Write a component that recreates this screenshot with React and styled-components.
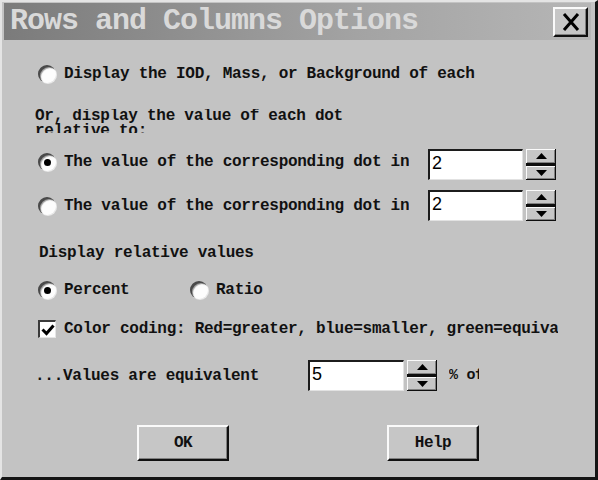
import React from "react";
import styled, { createGlobalStyle } from "styled-components";

const GlobalStyle = createGlobalStyle`
  html, body {
    margin: 0;
    padding: 0;
    background: #c3c3c3;
  }
`;

function Radio({ checked }) {
  return <RadioDot>{checked && <RadioPip />}</RadioDot>;
}

function Spinner() {
  return (
    <SpinBox>
      <SpinHalf>
        <svg width="11" height="6" viewBox="0 0 11 6">
          <path d="M0 6 L5.5 0 L11 6 Z" fill="#000" />
        </svg>
      </SpinHalf>
      <SpinHalf>
        <svg width="11" height="6" viewBox="0 0 11 6">
          <path d="M0 0 L5.5 6 L11 0 Z" fill="#000" />
        </svg>
      </SpinHalf>
    </SpinBox>
  );
}

export default function App() {
  return (
    <>
      <GlobalStyle />
      <Window>
        <TitleBar>
          <Title>Rows and Columns Options</Title>
          <CloseButton aria-label="Close">
            <svg width="18" height="18" viewBox="0 0 18 18">
              <path d="M2 1 L16 17 M16 1 L2 17" stroke="#000" strokeWidth="3" />
            </svg>
          </CloseButton>
        </TitleBar>

        <Body>
          <Row $top={20} $height={28}>
            <Choice>
              <Radio />
              <Label>Display the IOD, Mass, or Background of each</Label>
            </Choice>
          </Row>

          <Caption $top={21} $height={24} $lines>
            Or, display the value of each dot
            <br />
            relative to:
          </Caption>

          <Row $top={16} $height={31}>
            <Choice $width={390} $lift>
              <Radio checked />
              <Label>The value of the corresponding dot in</Label>
            </Choice>
            <TextField $width={95}>2</TextField>
            <Spinner />
          </Row>

          <Row $top={10} $height={31}>
            <Choice $width={390}>
              <Radio />
              <Label>The value of the corresponding dot in</Label>
            </Choice>
            <TextField $width={95}>2</TextField>
            <Spinner />
          </Row>

          <Caption $top={22} $height={20} $indent={4}>
            Display relative values
          </Caption>

          <Row $top={15} $height={24}>
            <Choice $width={152}>
              <Radio checked />
              <Label>Percent</Label>
            </Choice>
            <Choice>
              <Radio />
              <Label>Ratio</Label>
            </Choice>
          </Row>

          <Row $top={15} $height={24}>
            <Choice>
              <CheckBox>
                <svg width="14" height="14" viewBox="0 0 14 14">
                  <path
                    d="M1.5 6.5 L5.5 10.5 L12.5 2.5"
                    fill="none"
                    stroke="#000"
                    strokeWidth="3"
                  />
                </svg>
              </CheckBox>
              <Label $clip={494}>
                Color coding: Red=greater, blue=smaller, green=equivalent
              </Label>
            </Choice>
          </Row>

          <Row $top={19} $height={31} $indent={-3}>
            <Label $clip={273}>...Values are equivalent</Label>
            <TextField $width={96}>5</TextField>
            <Spinner />
            <Unit>% of</Unit>
          </Row>

          <ButtonRow>
            <PushButton>OK</PushButton>
            <PushButton>Help</PushButton>
          </ButtonRow>
        </Body>
      </Window>
    </>
  );
}

const Window = styled.div`
  width: 598px;
  height: 480px;
  box-sizing: border-box;
  display: flex;
  flex-direction: column;
  background: #c3c3c3;
  border-top: 2px solid #e4e4e4;
  border-left: 2px solid #e4e4e4;
  border-right: 3px solid #141414;
  border-bottom: 3px solid #141414;
  padding: 1px 4px 0 2px;
  font-family: "Liberation Mono", "Courier New", monospace;
  color: #111;
`;

const TitleBar = styled.div`
  height: 37px;
  flex: none;
  display: flex;
  align-items: center;
  justify-content: space-between;
  padding: 0 3px 0 6px;
  background: linear-gradient(to right, #7b7b7b, #a3a3a3 60%, #b6b6b6);
`;

const Title = styled.div`
  font-size: 30px;
  font-weight: bold;
  letter-spacing: -1px;
  color: #d9d9d9;
  white-space: nowrap;
  line-height: 37px;
`;

const CloseButton = styled.div`
  width: 35px;
  height: 30px;
  box-sizing: border-box;
  display: flex;
  align-items: center;
  justify-content: center;
  background: #c6c6c6;
  border-top: 2px solid #fafafa;
  border-left: 2px solid #fafafa;
  border-right: 2px solid #101010;
  border-bottom: 2px solid #101010;
  box-shadow: inset -1px -1px 0 #808080;
  margin-top: 1px;
`;

const Body = styled.div`
  display: flex;
  flex-direction: column;
  padding-left: 31px;
`;

const Row = styled.div`
  display: flex;
  align-items: center;
  height: ${(p) => p.$height}px;
  margin-top: ${(p) => p.$top}px;
  margin-left: ${(p) => 3 + (p.$indent || 0)}px;
`;

/* the second line is cut by the label's box, as in the original dialog */
const Caption = styled.div`
  height: ${(p) => p.$height}px;
  margin-top: ${(p) => p.$top}px;
  margin-left: ${(p) => p.$indent || 0}px;
  overflow: hidden;
  font-size: 16px;
  font-weight: bold;
  letter-spacing: -0.27px;
  line-height: ${(p) => (p.$lines ? 15 : p.$height)}px;
  white-space: nowrap;
`;

const Choice = styled.div`
  display: flex;
  align-items: center;
  gap: 8px;
  flex: none;
  width: ${(p) => (p.$width ? `${p.$width}px` : "auto")};
  padding-bottom: ${(p) => (p.$lift ? 6 : 0)}px;
`;

const Label = styled.span`
  font-size: 16px;
  font-weight: bold;
  letter-spacing: -0.27px;
  white-space: nowrap;
  overflow: hidden;
  flex: none;
  width: ${(p) => (p.$clip ? `${p.$clip}px` : "auto")};
`;

const RadioDot = styled.span`
  width: 18px;
  height: 18px;
  flex: none;
  border-radius: 50%;
  background: #fdfdfd;
  box-shadow: inset 2px 2px 0 #4a4a4a, inset 3px 3px 1px #9a9a9a,
    1px 1px 0 #e8e8e8;
  display: flex;
  align-items: center;
  justify-content: center;
`;

const RadioPip = styled.span`
  width: 7px;
  height: 7px;
  border-radius: 50%;
  background: #000;
  margin: 1px 0 0 1px;
`;

const CheckBox = styled.span`
  width: 18px;
  height: 18px;
  box-sizing: border-box;
  flex: none;
  background: #fff;
  border-top: 2px solid #3a3a3a;
  border-left: 2px solid #3a3a3a;
  border-right: 1px solid #e6e6e6;
  border-bottom: 1px solid #e6e6e6;
  display: flex;
  align-items: center;
  justify-content: center;
`;

const TextField = styled.div`
  width: ${(p) => p.$width}px;
  height: 31px;
  box-sizing: border-box;
  flex: none;
  background: #fff;
  border-top: 2px solid #1c1c1c;
  border-left: 2px solid #1c1c1c;
  border-right: 1px solid #e2e2e2;
  border-bottom: 1px solid #e2e2e2;
  padding: 2px 0 0 2px;
  font-family: "Liberation Sans", Arial, sans-serif;
  font-size: 18px;
  line-height: 20px;
  color: #000;
`;

const SpinBox = styled.div`
  width: 30px;
  height: 31px;
  box-sizing: border-box;
  flex: none;
  margin-left: 3px;
  display: flex;
  flex-direction: column;
  gap: 3px;
  background: #0e0e0e;
  padding: 0 1px 1px 0;
`;

const SpinHalf = styled.div`
  flex: 1;
  display: flex;
  align-items: center;
  justify-content: center;
  background: #c6c6c6;
  border-top: 1px solid #fafafa;
  border-left: 1px solid #fafafa;
  box-shadow: inset -1px -1px 0 #808080;
`;

const Unit = styled.span`
  margin-left: 12px;
  width: 30px;
  overflow: hidden;
  white-space: nowrap;
  font-size: 15px;
  font-weight: bold;
  letter-spacing: -0.3px;
`;

const ButtonRow = styled.div`
  display: flex;
  gap: 158px;
  margin-top: 34px;
  padding-left: 102px;
`;

const PushButton = styled.div`
  width: 92px;
  height: 36px;
  box-sizing: border-box;
  display: flex;
  align-items: center;
  justify-content: center;
  background: #c6c6c6;
  border-top: 2px solid #fafafa;
  border-left: 2px solid #fafafa;
  border-right: 2px solid #101010;
  border-bottom: 2px solid #101010;
  box-shadow: inset -1px -1px 0 #808080;
  font-size: 16px;
  font-weight: bold;
  letter-spacing: -0.5px;
`;
